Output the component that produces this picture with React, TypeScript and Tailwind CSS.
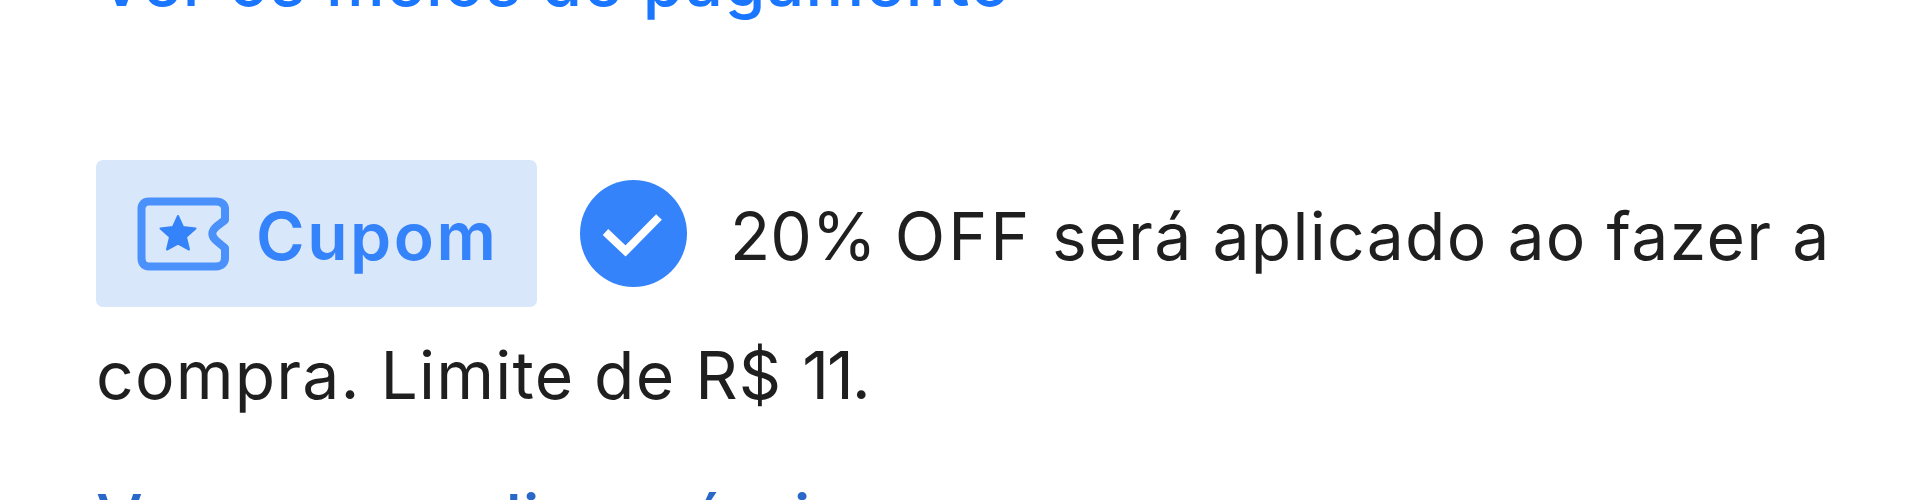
const textBase = "whitespace-nowrap text-[66px] leading-[80px]";

function TicketIcon() {
  return (
    <svg width="92" height="74" viewBox="0 0 92 74" fill="none" aria-hidden="true">
      <path
        d="M12 4.500H79C84.500 4.500 88 7.500 88 12V23L79.500 29.500C74 34.500 74 38.500 79 43.500L88 51V61C88 66 84.500 69.500 79 69.500H12C7 69.500 4.500 66 4.500 61V12C4.500 7.500 7 4.500 12 4.500Z"
        stroke="#4a91fb"
        strokeWidth="8"
        strokeLinejoin="round"
      />
      <path
        d="M41 19L46 30L58.500 31.500L49 40L52 52.500L41 46.500L30 52.500L33 40L23.500 31.500L36 30Z"
        fill="#3483fa"
        stroke="#3483fa"
        strokeWidth="2"
        strokeLinejoin="round"
      />
    </svg>
  );
}

function CheckIcon() {
  return (
    <svg width="107" height="107" viewBox="0 0 107 107" fill="none" aria-hidden="true">
      <circle cx="53.500" cy="53.500" r="53.500" fill="#3483fa" />
      <path d="M25.500 52L45.500 71L79 37" stroke="#fff" strokeWidth="8" />
    </svg>
  );
}

export default function App() {
  return (
    <main className="flex h-[500px] w-full flex-col items-start overflow-hidden bg-white pl-24 font-['Inter',sans-serif] text-[#1f1f1f]">
      <a href="#" className={`${textBase} -mt-[58px] ml-0.5 font-medium tracking-[1.4px] text-[#1a75ff]`}>
        Ver os meios de pagamento
      </a>

      <div className="mt-[138px] flex h-[147px] items-center">
        <div className="flex h-[147px] w-[441px] items-center rounded-[7px] bg-[#d9e7fa] pl-[41px] text-[#3483fa]">
          <TicketIcon />
          <span className={`${textBase} ml-[27px] pt-1 font-semibold tracking-[2.5px]`}>Cupom</span>
        </div>
        <div className="ml-[43px]">
          <CheckIcon />
        </div>
        <p className={`${textBase} ml-[43px] pt-[5px] tracking-[1.3px]`}>
          <span className="tracking-[-0.1px]">20% </span>
          <span className="tracking-[3px]">OFF</span> será aplicado ao fazer a
        </p>
      </div>

      <p className={`${textBase} mt-[28px] tracking-[1.2px]`}>
        compra. Limite de R$ <span className="tracking-[-2px]">11.</span>
      </p>

      <a href="#" className={`${textBase} mt-[63px] font-medium tracking-[0.8px] text-[#2968c8]`}>
        Ver cupons disponíveis
      </a>
    </main>
  );
}
